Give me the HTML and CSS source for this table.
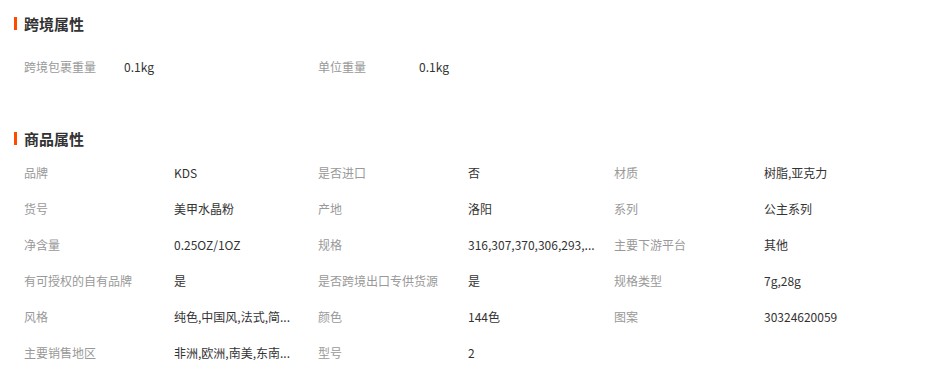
FILE: index.html
```html
<!DOCTYPE html>
<html lang="zh-CN">
<head>
<meta charset="utf-8">
<title>属性</title>
<link rel="stylesheet" href="styles.css">
</head>
<body>
<div class="page">
  <section class="section section-cross">
    <h2 class="title"><span class="bar"></span>跨境属性</h2>
    <div class="cross-grid">
      <div class="item"><span class="label label-short">跨境包裹重量</span><span class="value">0.1kg</span></div>
      <div class="item"><span class="label label-short">单位重量</span><span class="value">0.1kg</span></div>
    </div>
  </section>
  <section class="section section-product">
    <h2 class="title"><span class="bar"></span>商品属性</h2>
    <div class="attr-grid">
      <div class="item"><span class="label">品牌</span><span class="value">KDS</span></div>
      <div class="item"><span class="label">是否进口</span><span class="value">否</span></div>
      <div class="item"><span class="label">材质</span><span class="value">树脂,亚克力</span></div>

      <div class="item"><span class="label">货号</span><span class="value">美甲水晶粉</span></div>
      <div class="item"><span class="label">产地</span><span class="value">洛阳</span></div>
      <div class="item"><span class="label">系列</span><span class="value">公主系列</span></div>

      <div class="item"><span class="label">净含量</span><span class="value">0.25OZ/1OZ</span></div>
      <div class="item"><span class="label">规格</span><span class="value" title="316,307,370,306,293">316,307,370,306,293,...</span></div>
      <div class="item"><span class="label">主要下游平台</span><span class="value">其他</span></div>

      <div class="item"><span class="label">有可授权的自有品牌</span><span class="value">是</span></div>
      <div class="item"><span class="label">是否跨境出口专供货源</span><span class="value">是</span></div>
      <div class="item"><span class="label">规格类型</span><span class="value">7g,28g</span></div>

      <div class="item"><span class="label">风格</span><span class="value" title="纯色,中国风,法式,简约">纯色,中国风,法式,简...</span></div>
      <div class="item"><span class="label">颜色</span><span class="value">144色</span></div>
      <div class="item"><span class="label">图案</span><span class="value">30324620059</span></div>

      <div class="item"><span class="label">主要销售地区</span><span class="value" title="非洲,欧洲,南美,东南亚">非洲,欧洲,南美,东南...</span></div>
      <div class="item"><span class="label">型号</span><span class="value">2</span></div>
      <div class="item"></div>
    </div>
  </section>
</div>
</body>
</html>
```
FILE: styles.css
```css
* { box-sizing: border-box; }
html, body { margin: 0; padding: 0; background: #fff; }
body {
  font-family: "Noto Sans CJK SC", "Liberation Sans", sans-serif;
  font-size: 12px;
  color: #333;
}
.page { padding: 12px 0 0 14px; }
.title {
  display: flex;
  align-items: center;
  margin: 0;
  height: 22px;
  font-size: 15px;
  font-weight: bold;
  color: #333;
}
.bar {
  display: inline-block;
  width: 3px;
  height: 13px;
  background: #ff4a00;
  margin-right: 7px;
}
.section-cross .title { margin-bottom: 15px; }
.section-product { margin-top: 42px; }
.section-product .title { margin-bottom: 6px; }
.cross-grid {
  display: grid;
  grid-template-columns: 294px 294px;
  padding-left: 10px;
}
.attr-grid {
  display: grid;
  grid-template-columns: 294px 296px 294px;
  padding-left: 10px;
}
.item {
  display: flex;
  height: 36px;
  line-height: 36px;
  white-space: nowrap;
}
.label {
  width: 150px;
  flex: none;
  color: #999;
}
.label-short { width: 100px; }
.cross-grid .item:nth-child(2) .label-short { width: 101px; }
.value {
  color: #333;
}
```
